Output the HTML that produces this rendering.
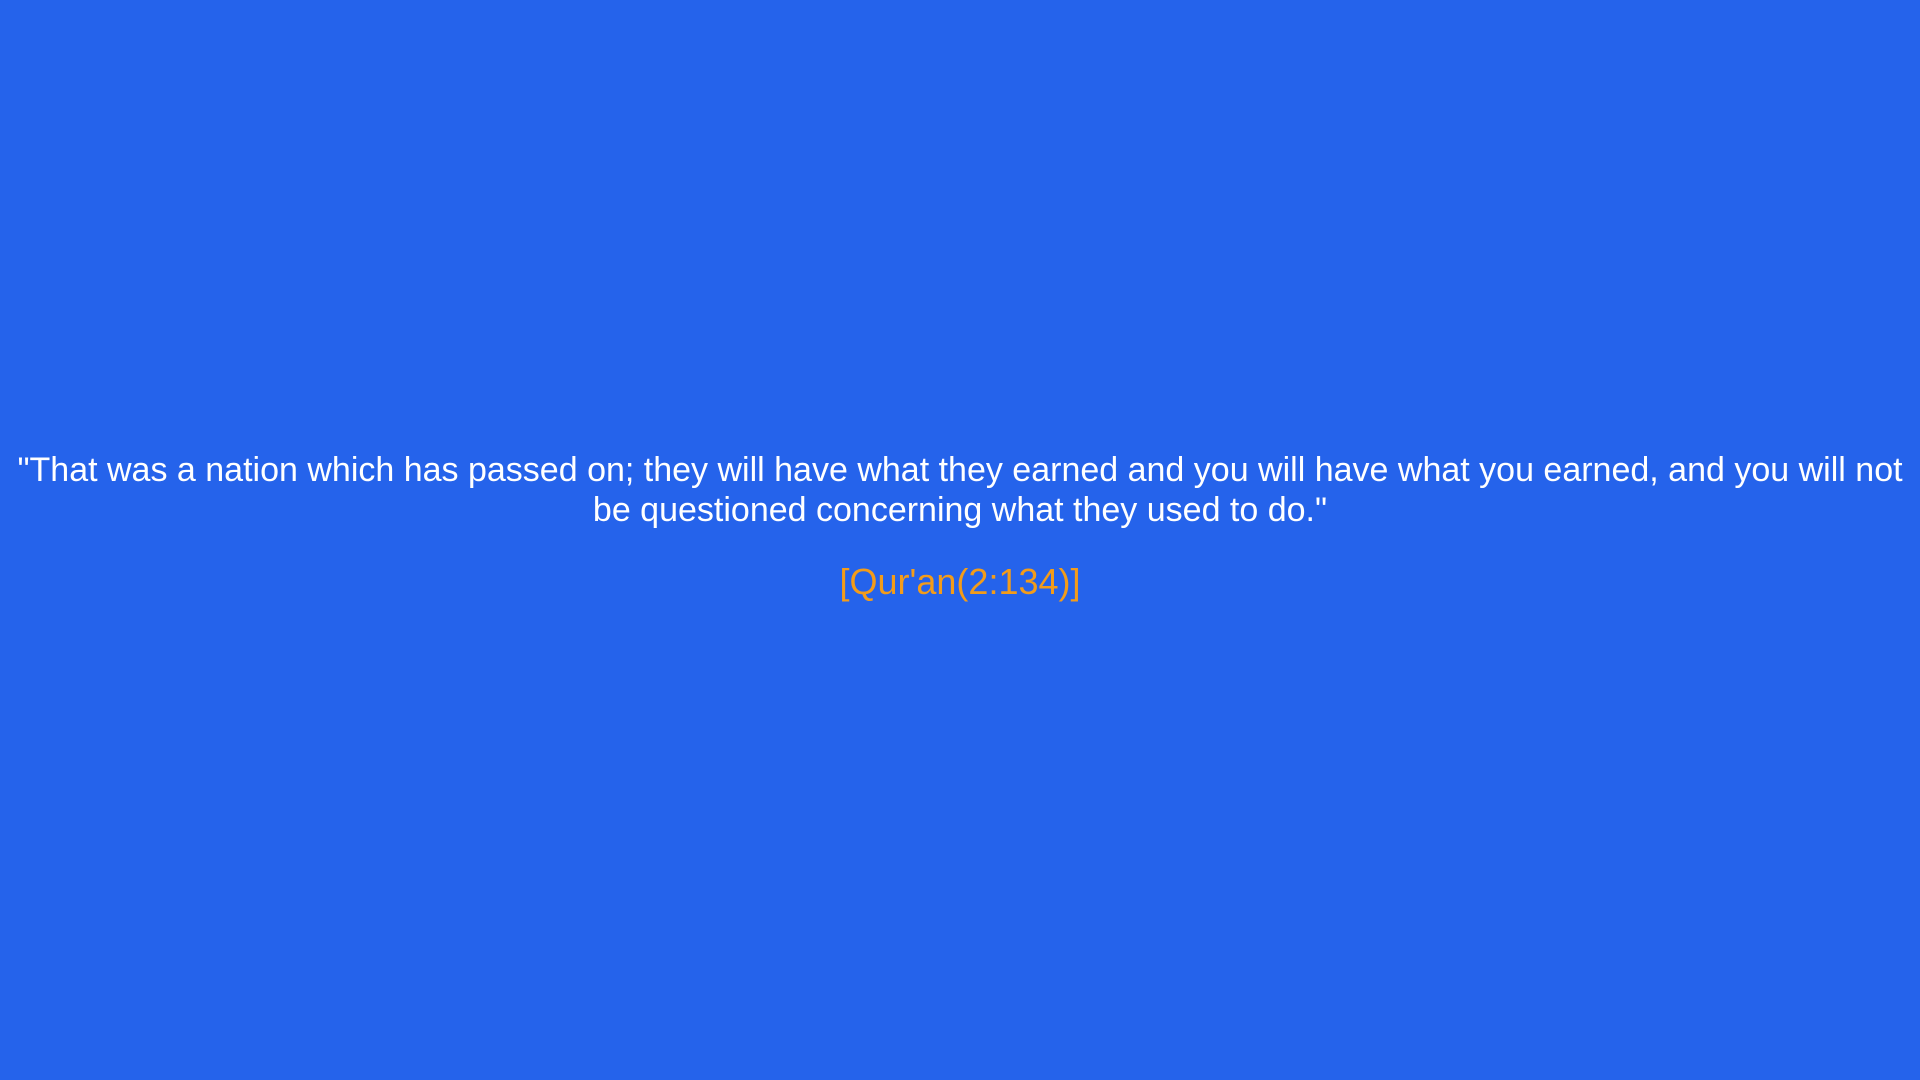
<!DOCTYPE html>
<html><head><meta charset="utf-8"><style>
html,body{margin:0;padding:0;width:1920px;height:1080px;background:#2563eb;overflow:hidden}
body{font-family:"Liberation Sans",sans-serif;}
.q{position:absolute;left:0;width:1920px;top:450px;text-align:center;color:#fff;font-size:34px;line-height:40px;font-weight:normal;white-space:nowrap}
.c{position:absolute;left:0;width:1920px;top:561px;text-align:center;color:#f39c1a;font-size:36px;line-height:42px}
</style></head><body>
<div class="q">"That was a nation which has passed on; they will have what they earned and you will have what you earned, and you will not<br>be questioned concerning what they used to do."</div>
<div class="c">[Qur'an(2:134)]</div>
</body></html>
